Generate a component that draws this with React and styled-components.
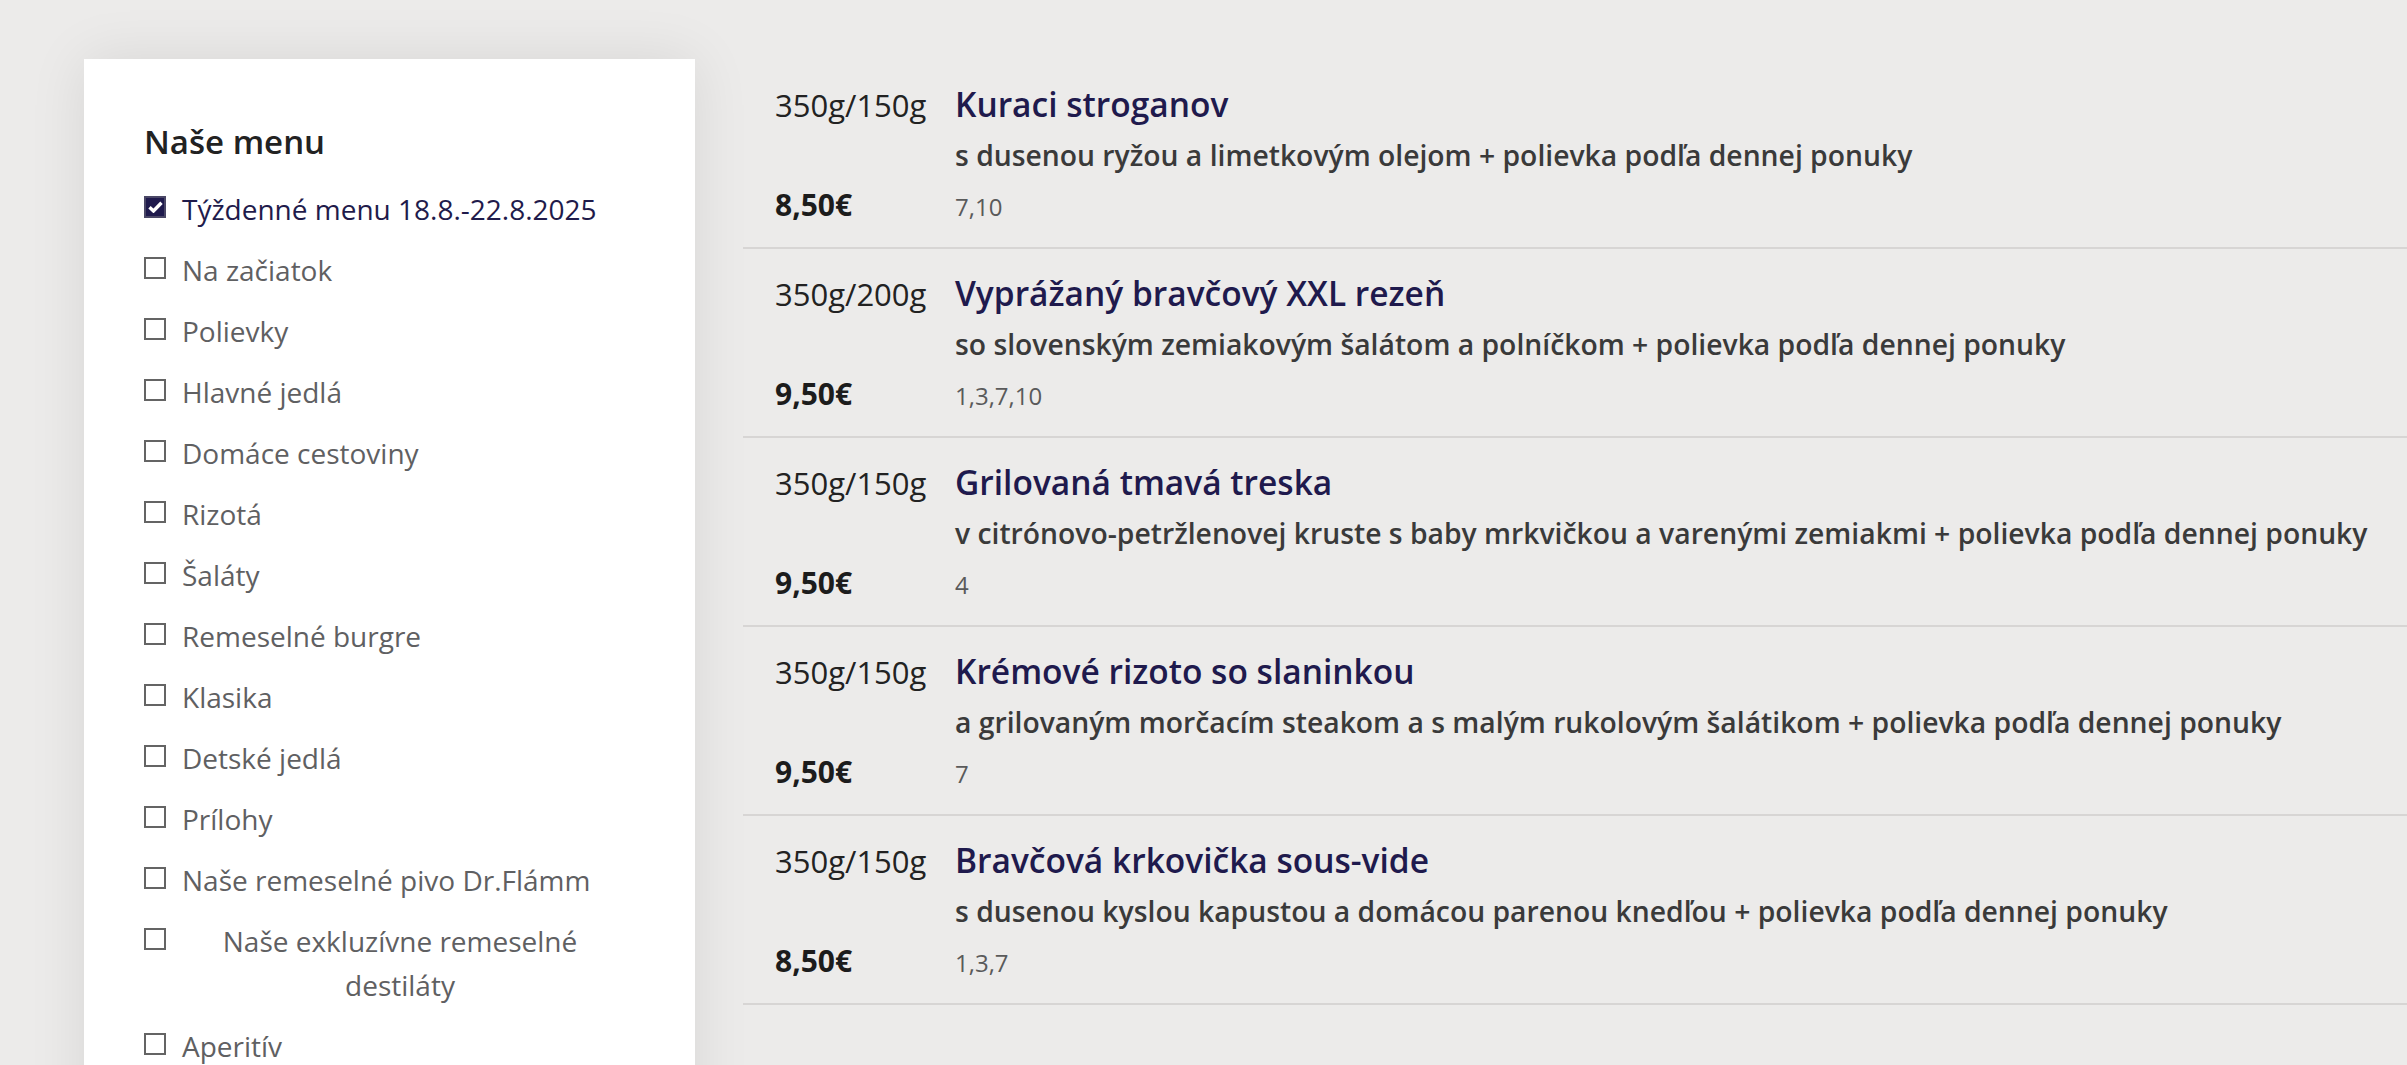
import React from "react";
import styled, { createGlobalStyle } from "styled-components";

const GlobalStyle = createGlobalStyle`
    html, body {
        margin: 0;
        padding: 0;
        background: #ecebea;
        font-family: "Open Sans", "Noto Sans", sans-serif;
        overflow: hidden;
    }
`;

const categories = [
    { name: "Týždenné menu 18.8.-22.8.2025", checked: true },
    { name: "Na začiatok" },
    { name: "Polievky" },
    { name: "Hlavné jedlá" },
    { name: "Domáce cestoviny" },
    { name: "Rizotá" },
    { name: "Šaláty" },
    { name: "Remeselné burgre" },
    { name: "Klasika" },
    { name: "Detské jedlá" },
    { name: "Prílohy" },
    { name: "Naše remeselné pivo Dr.Flámm" },
    { name: "Naše exkluzívne remeselné destiláty" },
    { name: "Aperitív" },
];

const dishes = [
    {
        weight: "350g/150g",
        title: "Kuraci stroganov",
        desc: "s dusenou ryžou a limetkovým olejom + polievka podľa dennej ponuky",
        price: "8,50€",
        allergens: "7,10",
    },
    {
        weight: "350g/200g",
        title: "Vyprážaný bravčový XXL rezeň",
        desc: "so slovenským zemiakovým šalátom a polníčkom + polievka podľa dennej ponuky",
        price: "9,50€",
        allergens: "1,3,7,10",
    },
    {
        weight: "350g/150g",
        title: "Grilovaná tmavá treska",
        desc: "v citrónovo-petržlenovej kruste s baby mrkvičkou a varenými zemiakmi + polievka podľa dennej ponuky",
        price: "9,50€",
        allergens: "4",
    },
    {
        weight: "350g/150g",
        title: "Krémové rizoto so slaninkou",
        desc: "a grilovaným morčacím steakom a s malým rukolovým šalátikom + polievka podľa dennej ponuky",
        price: "9,50€",
        allergens: "7",
    },
    {
        weight: "350g/150g",
        title: "Bravčová krkovička sous-vide",
        desc: "s dusenou kyslou kapustou a domácou parenou knedľou + polievka podľa dennej ponuky",
        price: "8,50€",
        allergens: "1,3,7",
    },
];

const Page = styled.div`
    display: flex;
    align-items: flex-start;
    padding: 59px 0 0 84px;
    min-height: 1065px;
    box-sizing: border-box;
`;

const Sidebar = styled.aside`
    flex: 0 0 611px;
    box-sizing: border-box;
    background: #ffffff;
    padding: 63px 77px 120px 60px;
    box-shadow: 0 0 55px rgba(0, 0, 0, 0.09);
`;

const SidebarTitle = styled.h2`
    margin: 0 0 25px;
    font-size: 33px;
    line-height: 40px;
    font-weight: 600;
    color: #222222;
`;

const CategoryList = styled.ul`
    list-style: none;
    margin: 0;
    padding: 0;
    display: flex;
    flex-direction: column;
    gap: 17px;
`;

const CategoryItem = styled.li`
    display: flex;
    align-items: flex-start;
    gap: 16px;
`;

const Box = styled.span`
    flex: 0 0 auto;
    width: 22px;
    height: 22px;
    margin-top: 9px;
    box-sizing: border-box;
    border: 2px solid ${(p) => (p.$checked ? "#4a4766" : "#646464")};
    background: ${(p) => (p.$checked ? "#1f1a4d" : "#ffffff")};
    display: flex;
    align-items: center;
    justify-content: center;
`;

const CategoryLabel = styled.span`
    flex: 0 1 auto;
    font-size: 28px;
    line-height: 44px;
    text-align: center;
    color: ${(p) => (p.$checked ? "#1f1b4b" : "#5f6062")};
`;

const Menu = styled.main`
    flex: 1;
    margin-left: 48px;
    padding-top: 1px;
`;

const Dish = styled.article`
    display: grid;
    grid-template-columns: 180px 1fr;
    align-items: baseline;
    row-gap: 10px;
    padding: 24px 0 20px 32px;
    border-bottom: 2px solid #d7d5d4;
`;

const Weight = styled.span`
    font-size: 31px;
    line-height: 40px;
    color: #222222;
`;

const DishTitle = styled.h3`
    margin: 0;
    font-size: 33.5px;
    line-height: 40px;
    font-weight: 600;
    color: #1f1a4d;
`;

const Description = styled.p`
    grid-column: 2;
    margin: 0;
    font-size: 28.3px;
    line-height: 40px;
    font-weight: 600;
    color: #3a3a3a;
    white-space: nowrap;
`;

const Price = styled.span`
    font-size: 30px;
    line-height: 40px;
    font-weight: 700;
    color: #1c1c1c;
`;

const Allergens = styled.span`
    font-size: 24px;
    line-height: 40px;
    color: #5a5a5a;
`;

const Check = () => (
    <svg width="15" height="12" viewBox="0 0 15 12">
        <path d="M1.5 6.2 L5.5 10 L13.5 1.8" fill="none" stroke="#ffffff" strokeWidth="3.4" />
    </svg>
);

const Category = ({ name, checked }) => (
    <CategoryItem>
        <Box $checked={checked}>{checked && <Check />}</Box>
        <CategoryLabel $checked={checked}>{name}</CategoryLabel>
    </CategoryItem>
);

export default function App() {
    return (
        <>
            <GlobalStyle />
            <Page>
                <Sidebar>
                    <SidebarTitle>Naše menu</SidebarTitle>
                    <CategoryList>
                        {categories.map((c) => (
                            <Category key={c.name} {...c} />
                        ))}
                    </CategoryList>
                </Sidebar>
                <Menu>
                    {dishes.map((d) => (
                        <Dish key={d.title}>
                            <Weight>{d.weight}</Weight>
                            <DishTitle>{d.title}</DishTitle>
                            <Description>{d.desc}</Description>
                            <Price>{d.price}</Price>
                            <Allergens>{d.allergens}</Allergens>
                        </Dish>
                    ))}
                </Menu>
            </Page>
        </>
    );
}
